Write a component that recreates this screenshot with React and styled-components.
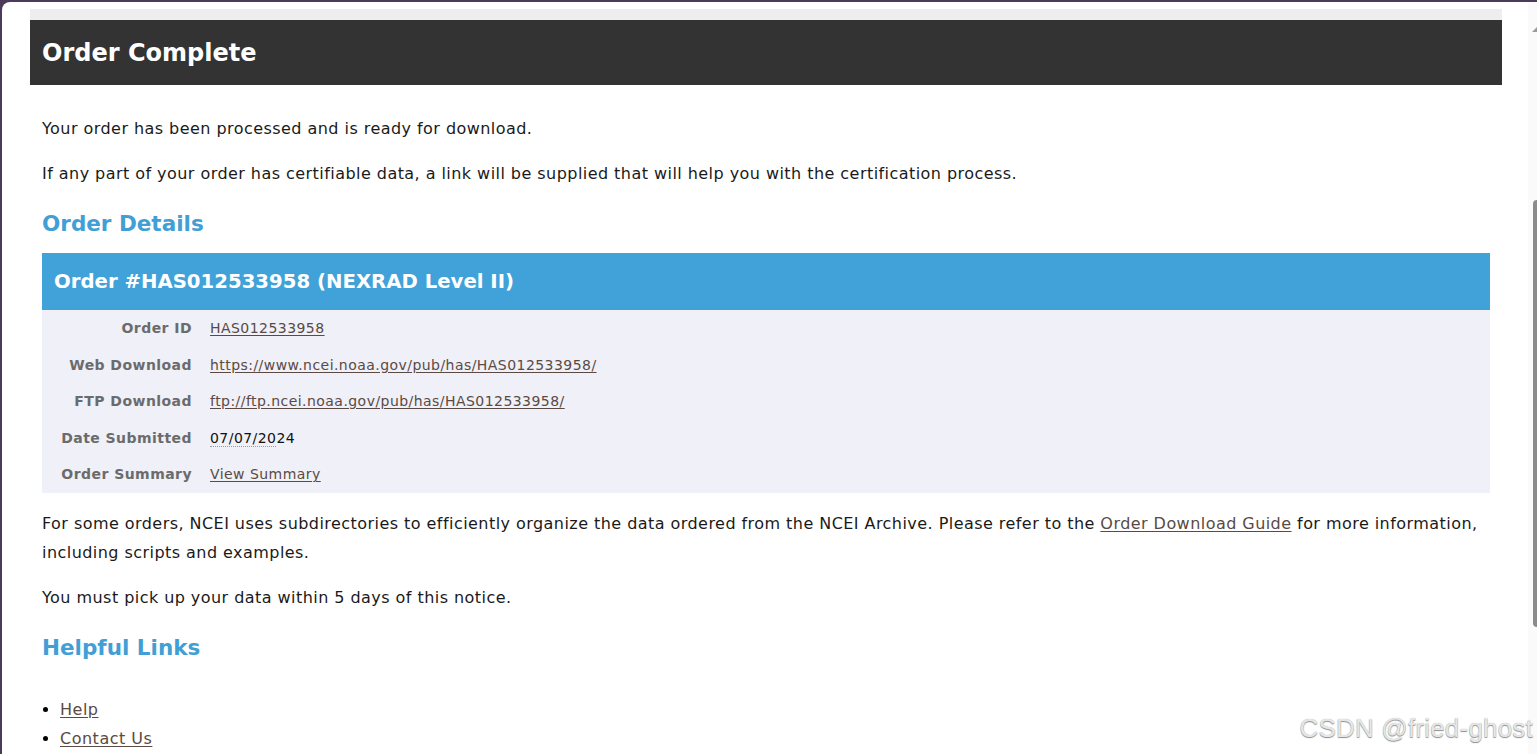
import React from "react";
import styled, { createGlobalStyle } from "styled-components";

const GlobalStyle = createGlobalStyle`
  html, body {
    margin: 0;
    padding: 0;
    height: 100%;
    overflow: hidden;
    background: #4b3a5c;
  }
  #root {
    height: 100%;
  }
`;

const Frame = styled.div`
  position: relative;
  display: flex;
  height: calc(100vh - 2px);
  margin: 2px 0 0 2px;
  background: #ffffff;
  border-top-left-radius: 8px;
  overflow: hidden;
  font-family: "DejaVu Sans", Verdana, sans-serif;
`;

const Page = styled.div`
  flex: 1;
  padding: 7px 0 0 28px;
`;

const Column = styled.div`
  width: 1472px;
  border-top: 11px solid #eeeeee;
`;

const Banner = styled.div`
  display: flex;
  align-items: center;
  height: 65px;
  padding: 0 12px;
  background: #333333;
`;

const BannerTitle = styled.h1`
  margin: 0;
  font-size: 24px;
  font-weight: bold;
  color: #ffffff;
`;

const Body = styled.div`
  padding: 29px 12px 0;
`;

const Text = styled.p`
  margin: 0 0 16px;
  font-size: 16px;
  letter-spacing: 0.45px;
  line-height: 29px;
  color: #1a1a1a;
`;

const SectionTitle = styled.h2`
  margin: 21px 0 14px;
  font-size: 21.5px;
  line-height: 30px;
  font-weight: bold;
  color: #419fd6;
`;

const Link = styled.a`
  color: #5b4a43;
  text-decoration: underline;
  text-underline-offset: 2px;
  cursor: pointer;
`;

const OrderCard = styled.div`
  margin-bottom: 16px;
`;

const OrderHead = styled.div`
  display: flex;
  align-items: center;
  height: 57px;
  padding: 0 12px;
  background: #41a1d9;
  font-size: 19.7px;
  font-weight: bold;
  color: #ffffff;
`;

const Details = styled.dl`
  display: grid;
  grid-template-columns: 150px 1fr;
  grid-auto-rows: 36.5px;
  column-gap: 18px;
  margin: 0;
  padding: 0;
  background: #eff0f8;
  font-size: 14px;
  letter-spacing: 0.45px;
`;

const Label = styled.dt`
  display: flex;
  align-items: center;
  justify-content: flex-end;
  font-weight: bold;
  color: #6b6b6b;
`;

const Value = styled.dd`
  display: flex;
  align-items: center;
  margin: 0;
  color: #111111;
`;

const DateMark = styled.span`
  border-bottom: 1px dotted #9a9a9a;
`;

const LinkList = styled.ul`
  margin: 32px 0 0;
  padding-left: 18px;
  font-size: 16px;
  letter-spacing: 0.5px;
  line-height: 29px;
`;

const Item = styled.li`
  padding-left: 0;
`;

const ScrollTrack = styled.div`
  position: relative;
  width: 9px;
  background: #fafafa;
`;

const ScrollArrow = styled.div`
  position: absolute;
  top: 25px;
  right: 0;
  width: 0;
  height: 0;
  border-left: 5px solid transparent;
  border-bottom: 5px solid #9a9a9a;
`;

const ScrollThumb = styled.div`
  position: absolute;
  top: 198px;
  right: 0;
  width: 4px;
  height: 427px;
  background: #8b8b8b;
  border-radius: 4px 0 0 4px;
`;

const Watermark = styled.div`
  position: absolute;
  right: 4px;
  bottom: 10px;
  font-family: "Liberation Sans", Arial, sans-serif;
  font-size: 26px;
  color: #e6e6e6;
  text-shadow: 0 1px 1px #8f8f8f, 0 0 1px #b0b0b0;
  letter-spacing: 0.2px;
`;

const rows = [
  { label: "Order ID", value: <Link>HAS012533958</Link> },
  {
    label: "Web Download",
    value: <Link>https://www.ncei.noaa.gov/pub/has/HAS012533958/</Link>,
  },
  {
    label: "FTP Download",
    value: <Link>ftp://ftp.ncei.noaa.gov/pub/has/HAS012533958/</Link>,
  },
  {
    label: "Date Submitted",
    value: (
      <span>
        <DateMark>07/07/20</DateMark>24
      </span>
    ),
  },
  { label: "Order Summary", value: <Link>View Summary</Link> },
];

export default function App() {
  return (
    <>
      <GlobalStyle />
      <Frame>
        <Page>
          <Column>
            <Banner>
              <BannerTitle>Order Complete</BannerTitle>
            </Banner>
            <Body>
              <Text>Your order has been processed and is ready for download.</Text>
              <Text>
                If any part of your order has certifiable data, a link will be
                supplied that will help you with the certification process.
              </Text>
              <SectionTitle>Order Details</SectionTitle>
              <OrderCard>
                <OrderHead>Order #HAS012533958 (NEXRAD Level II)</OrderHead>
                <Details>
                  {rows.map((r) => (
                    <React.Fragment key={r.label}>
                      <Label>{r.label}</Label>
                      <Value>{r.value}</Value>
                    </React.Fragment>
                  ))}
                </Details>
              </OrderCard>
              <Text>
                For some orders, NCEI uses subdirectories to efficiently organize
                the data ordered from the NCEI Archive. Please refer to the{" "}
                <Link>Order Download Guide</Link> for more information,
                including scripts and examples.
              </Text>
              <Text>You must pick up your data within 5 days of this notice.</Text>
              <SectionTitle>Helpful Links</SectionTitle>
              <LinkList>
                <Item>
                  <Link>Help</Link>
                </Item>
                <Item>
                  <Link>Contact Us</Link>
                </Item>
              </LinkList>
            </Body>
          </Column>
        </Page>
        <ScrollTrack>
          <ScrollArrow />
          <ScrollThumb />
        </ScrollTrack>
        <Watermark>CSDN @fried-ghost</Watermark>
      </Frame>
    </>
  );
}
